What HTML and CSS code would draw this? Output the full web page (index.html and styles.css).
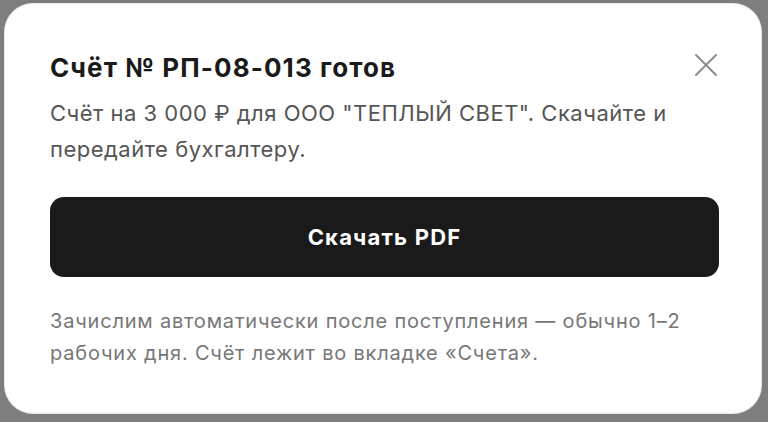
FILE: index.html
```html
<!DOCTYPE html>
<html lang="ru">
<head>
    <meta charset="UTF-8">
    <meta name="viewport" content="width=device-width, initial-scale=1.0">
    <title>Счёт готов</title>

    <link rel="stylesheet" href="styles.css">
</head>

<body>

    <div class="overlay">
        <div class="modal">

            <div class="modal-header">
                <h2 class="modal-title">Счёт № РП-08-013 готов</h2>
                <button type="button" class="close-btn" aria-label="Закрыть">
                    <svg width="24" height="24" viewBox="0 0 24 24" fill="none">
                        <path d="M2 2L22 22M22 2L2 22" stroke="#8c8c8c" stroke-width="2" stroke-linecap="round"/>
                    </svg>
                </button>
            </div>

            <p class="modal-text">Счёт на 3 000 ₽ для ООО "ТЕПЛЫЙ СВЕТ". Скачайте и передайте бухгалтеру.</p>

            <button type="button" class="download-btn">Скачать PDF</button>

            <p class="modal-note">Зачислим автоматически после поступления — обычно 1–2 рабочих дня. Счёт лежит во вкладке «Счета».</p>

        </div>
    </div>

</body>
</html>
```

FILE: styles.css
```css
body {
    font-family: 'Inter', 'Noto Sans', sans-serif;
    background-color: #7e7e7e;
    margin: 0;
    padding: 0;
    height: 422px;
    overflow: hidden;
}

.overlay {
    padding: 4px 0 0 5px;
}

.modal {
    box-sizing: border-box;
    width: 756px;
    height: 409px;
    padding: 49px 42px 0 45px;
    background-color: #fff;
    border-radius: 28px;
    box-shadow: 0 0 0 1px #e9e9e3;
}

.modal-header {
    display: flex;
    justify-content: space-between;
    align-items: flex-start;
}

.modal-title {
    margin: 0;
    font-size: 26px;
    line-height: 30px;
    font-weight: 700;
    letter-spacing: 1.1px;
    color: #1a1a1a;
}

.close-btn {
    background: none;
    border: none;
    padding: 0;
    margin: 0 1px 0 0;
    width: 24px;
    height: 24px;
    cursor: pointer;
}

.close-btn svg {
    display: block;
}

.modal-text {
    margin: 12px 0 0;
    font-size: 22px;
    line-height: 36px;
    letter-spacing: 0.5px;
    color: #555;
}

.download-btn {
    display: block;
    width: 100%;
    height: 80px;
    margin-top: 30px;
    background-color: #1a1a1a;
    border: none;
    border-radius: 14px;
    color: #fff;
    font-family: inherit;
    font-size: 22px;
    font-weight: 700;
    letter-spacing: 1.2px;
    cursor: pointer;
}

.modal-note {
    margin: 28px 0 0;
    font-size: 20px;
    line-height: 32px;
    letter-spacing: 0.8px;
    color: #777;
}
```
